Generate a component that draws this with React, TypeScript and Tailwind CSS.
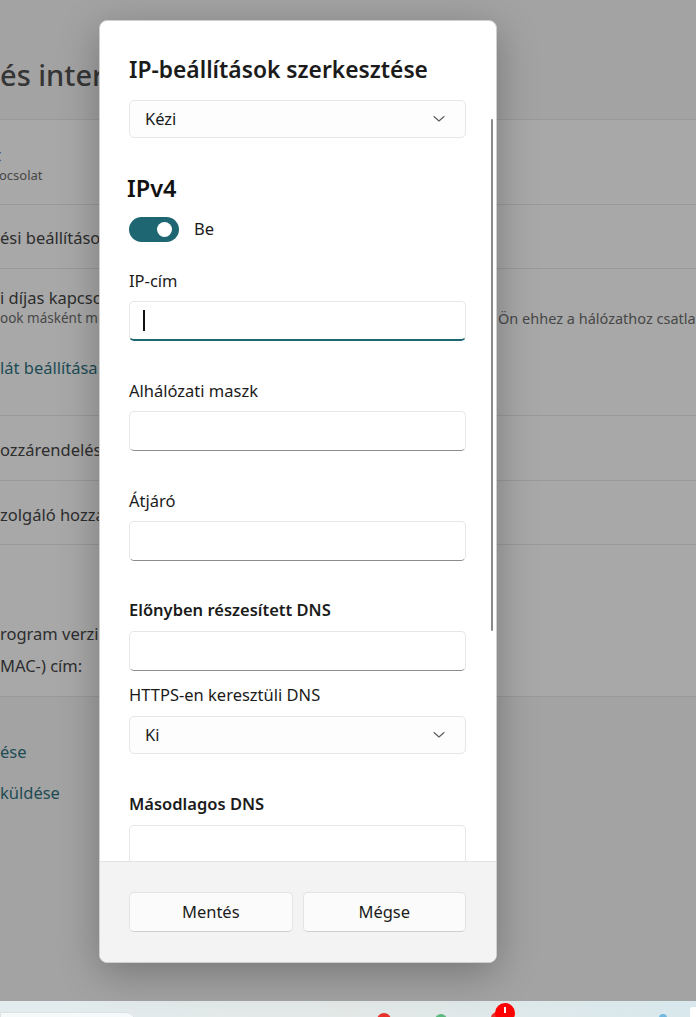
import React from "react";

const font = { fontFamily: '"Noto Sans", "Open Sans", sans-serif' };

function Chevron() {
  return (
    <svg width="12" height="8" viewBox="0 0 12 8" className="shrink-0">
      <path d="M1 1.5 L6 6 L11 1.5" fill="none" stroke="#5a5a5a" strokeWidth="1.1" strokeLinecap="round" strokeLinejoin="round" />
    </svg>
  );
}

function Select({ value }: { value: string }) {
  return (
    <div className="h-[38px] w-full rounded-[5px] border border-[#e6e6e6] bg-[#fdfdfd] flex items-center justify-between pl-[15px] pr-[20px] text-[16.5px] text-[#1b1b1b]">
      <span>{value}</span>
      <Chevron />
    </div>
  );
}

function Input({ focused = false }: { focused?: boolean }) {
  return (
    <div
      className={
        focused
          ? "h-[40px] w-full rounded-[5px] border border-[#e6e6e6] border-b-2 border-b-[#1d6773] bg-white flex items-center pl-[13px]"
          : "h-[40px] w-full rounded-[5px] border border-[#e6e6e6] border-b-[#8c8c8c] bg-white"
      }
    >
      {focused && <div className="w-[1.5px] h-[21px] bg-[#111]" />}
    </div>
  );
}

function Label({ children, bold = false, className = "" }: { children: React.ReactNode; bold?: boolean; className?: string }) {
  return (
    <div className={"h-[24px] leading-[24px] text-[16.5px] text-[#1b1b1b] " + (bold ? "font-semibold " : "") + className}>
      {children}
    </div>
  );
}

export default function App() {
  return (
    <div style={font} className="relative w-[696px] h-[1017px] overflow-hidden bg-[#a4a3a3]">
      {/* Background settings page (dimmed) */}
      <div className="flex flex-col h-[1001px] text-[#2d2d2d]">
        <div className="h-[119px] pt-[54px]">
          <div className="h-[42px] leading-[42px] text-[29px] font-medium whitespace-nowrap text-[#353535]">és internet</div>
        </div>
        <div className="h-[85px] border-t border-[#999] bg-[#a8a8a8] pt-[25px] whitespace-nowrap">
          <div className="h-[20px] leading-[20px] text-[16.5px] -ml-[5px]">t</div>
          <div className="h-[20px] leading-[20px] text-[13px] text-[#474747] -ml-[1px]">ocsolat</div>
        </div>
        <div className="h-[64px] border-t border-[#999] bg-[#a8a8a8] pt-[21px] whitespace-nowrap">
          <div className="h-[24px] leading-[24px] text-[16.5px]">ési beállítások</div>
        </div>
        <div className="h-[147px] border-t border-[#999] bg-[#a8a8a8] pt-[19px] whitespace-nowrap">
          <div className="h-[20px] leading-[20px] text-[16.5px]">i díjas kapcsolat</div>
          <div className="h-[20px] leading-[20px] text-[14.5px] text-[#474747] flex">
            <span className="w-[498px] shrink-0 overflow-hidden text-[13.5px]">ook másként működhetnek</span>
            <span>Ön ehhez a hálózathoz csatlakozik</span>
          </div>
          <div className="mt-[28px] h-[24px] leading-[24px] text-[16.5px] text-[#1d4c55]">lát beállítása</div>
        </div>
        <div className="h-[65px] border-t border-[#999] bg-[#a8a8a8] pt-[22px] whitespace-nowrap">
          <div className="h-[24px] leading-[24px] text-[16.5px]">ozzárendelés</div>
        </div>
        <div className="h-[64px] border-t border-[#999] bg-[#a8a8a8] pt-[22px] whitespace-nowrap">
          <div className="h-[24px] leading-[24px] text-[16.5px]">zolgáló hozzárendelés</div>
        </div>
        <div className="h-[152px] border-t border-[#999] bg-[#a8a8a8] pt-[77px] whitespace-nowrap">
          <div className="h-[24px] leading-[24px] text-[16.5px]">rogram verziója:</div>
          <div className="mt-[8px] h-[24px] leading-[24px] text-[16.5px]">MAC-) cím:</div>
        </div>
        <div className="flex-1 border-t border-[#999] pt-[43px] whitespace-nowrap">
          <div className="h-[24px] leading-[24px] text-[16.5px] text-[#1d4c55]">ése</div>
          <div className="mt-[17px] h-[24px] leading-[24px] text-[16.5px] text-[#1d4c55]">küldése</div>
        </div>
      </div>

      {/* Taskbar strip */}
      <div className="relative h-[16px] bg-gradient-to-r from-[#e2ecee] via-[#e4e9e8] to-[#d8e8ec]">
        <div className="absolute left-0 top-[11px] w-[136px] h-[20px] rounded-tr-[10px] bg-[#f7fafa] border border-[#dde3e4]" />
        <div className="absolute left-[377px] top-[12px] w-[14px] h-[14px] rounded-full bg-[#e8322c]" />
        <div className="absolute left-[435px] top-[13px] w-[12px] h-[12px] rounded-full bg-[#5cb87c]" />
        <div className="absolute left-[491px] top-[11px] w-[12px] h-[12px] rounded-full bg-[#e8322c]" />
        <div className="absolute left-[495px] top-[2px] w-[20px] h-[20px] rounded-full bg-[#f00] flex justify-center">
          <div className="w-[2px] h-[6px] bg-white mt-[4px]" />
        </div>
        <div className="absolute left-[659px] top-[13px] w-[8px] h-[8px] rounded-full bg-[#6fb7e0]" />
        <div className="absolute left-[690px] top-[6px] w-[10px] h-[14px] rounded-[3px] bg-white" />
      </div>

      {/* Dialog */}
      <div className="absolute left-[99px] top-[20px] w-[398px] h-[943px] rounded-[8px] bg-white overflow-hidden flex flex-col shadow-[0_10px_40px_rgba(0,0,0,0.28)] border border-[#cfcfcf]">
        <div className="relative flex-1 overflow-hidden">
          <div className="pl-[29px] pr-[30px] pt-[33px] flex flex-col">
            <div className="h-[32px] leading-[32px] text-[22.8px] font-semibold text-[#1b1b1b] whitespace-nowrap">IP-beállítások szerkesztése</div>
            <div className="mt-[14px]"><Select value="Kézi" /></div>
            <div className="mt-[34px] h-[32px] leading-[32px] text-[23.5px] font-semibold text-[#111] -ml-[2px]">IPv4</div>
            <div className="mt-[13px] flex items-center gap-[15px]">
              <div className="w-[50px] h-[25px] rounded-full bg-[#1e6671] flex items-center justify-end pr-[7px]">
                <div className="w-[15px] h-[15px] rounded-full bg-white" />
              </div>
              <span className="text-[16.5px] text-[#1b1b1b]">Be</span>
            </div>
            <Label className="mt-[27px]">IP-cím</Label>
            <div className="mt-[8px]"><Input focused /></div>
            <Label className="mt-[38px]">Alhálózati maszk</Label>
            <div className="mt-[8px]"><Input /></div>
            <Label className="mt-[38px]">Átjáró</Label>
            <div className="mt-[8px]"><Input /></div>
            <Label bold className="mt-[37px]">Előnyben részesített DNS</Label>
            <div className="mt-[9px]"><Input /></div>
            <Label className="mt-[12px]">HTTPS-en keresztüli DNS</Label>
            <div className="mt-[9px]"><Select value="Ki" /></div>
            <Label bold className="mt-[38px]">Másodlagos DNS</Label>
            <div className="mt-[9px]"><Input /></div>
          </div>
          {/* scrollbar */}
          <div className="absolute left-[391px] top-[98px] w-[2px] h-[512px] rounded-full bg-[#8a8a8a]" />
        </div>
        <div className="h-[101px] shrink-0 border-t border-[#e3e3e3] bg-[#f3f3f3] pl-[29px] pr-[30px] pt-[30px]">
          <div className="grid grid-cols-2 gap-[10px]">
            <button className="h-[40px] rounded-[5px] border border-[#e3e3e3] border-b-[#cfcfcf] bg-[#fbfbfb] text-[16.5px] text-[#1b1b1b]">Mentés</button>
            <button className="h-[40px] rounded-[5px] border border-[#e3e3e3] border-b-[#cfcfcf] bg-[#fbfbfb] text-[16.5px] text-[#1b1b1b]">Mégse</button>
          </div>
        </div>
      </div>
    </div>
  );
}
